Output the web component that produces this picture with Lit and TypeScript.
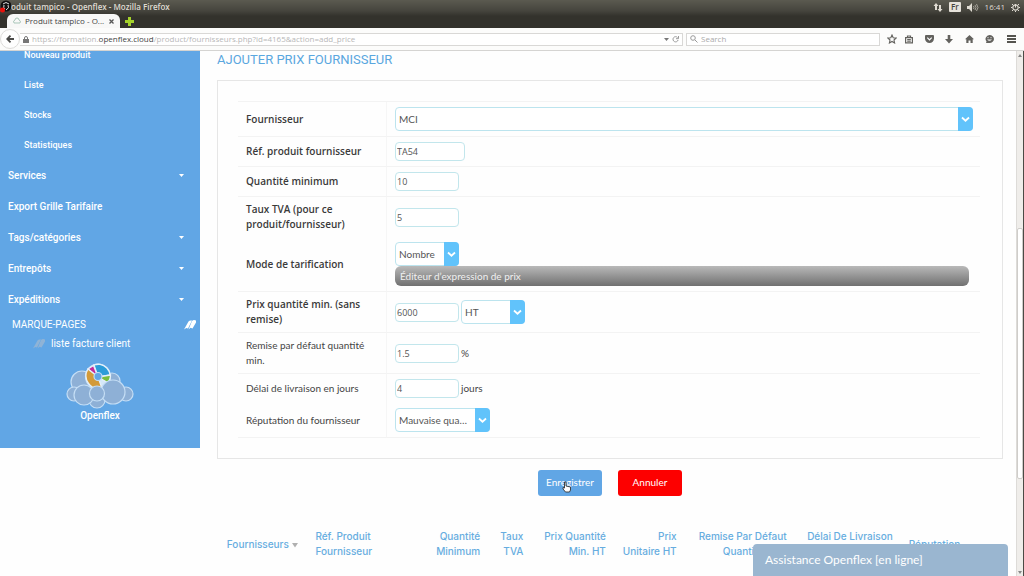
import { LitElement, html, css, svg, nothing } from "lit";
import { customElement } from "lit/decorators.js";

const SUB_ITEMS = ["Nouveau produit", "Liste", "Stocks", "Statistiques"];
const MAIN_ITEMS = [
  { label: "Services", open: true },
  { label: "Export Grille Tarifaire", open: false },
  { label: "Tags/catégories", open: true },
  { label: "Entrepôts", open: true },
  { label: "Expéditions", open: true },
];
const COLUMNS = [
  { lines: ["Réf. Produit", "Fournisseur"], left: true },
  { lines: ["Quantité", "Minimum"] },
  { lines: ["Taux", "TVA"] },
  { lines: ["Prix Quantité", "Min. HT"] },
  { lines: ["Prix", "Unitaire HT"] },
  { lines: ["Remise Par Défaut", "Quantité Min."] },
  { lines: ["Délai De Livraison", "\u00a0"] },
  { lines: ["Réputation"], left: true },
];

@customElement("browser-chrome")
class BrowserChrome extends LitElement {
  static styles = css`
    :host { display: block; font: 8px/12px "Open Sans", sans-serif; }
    .top { height: 28px; background: linear-gradient(#5b5a50, #45443d 11px, #33322c 16px, #33322c); color: #dfdbd2; display: flex; flex-direction: column; overflow: hidden; }
    .title { display: flex; align-items: center; height: 14px; }
    .title svg { flex: none; }
    .title strong { font-weight: 600; flex: 1; }
    .tray { display: flex; align-items: center; gap: 6px; padding-right: 4px; }
    .lang { background: #e6e2da; color: #45443d; border-radius: 1px; padding: 0 2px; line-height: 10px; font-weight: 600; }
    .tabs { display: flex; height: 14px; align-items: center; padding-left: 7px; gap: 5px; }
    .tab { display: flex; align-items: center; gap: 4px; height: 14px; width: 101px; padding: 0 6px; background: #f8f8f7; color: #444; border-radius: 6px 6px 0 0; box-sizing: content-box; }
    .tab span { flex: 1; white-space: nowrap; }
    button { border: 0; padding: 0; background: none; display: flex; align-items: center; justify-content: center; color: #63625e; font: inherit; }
    .bar { display: flex; align-items: center; height: 22px; background: #fcfcfb; border-bottom: 1px solid #d5d4d2; padding-right: 8px; }
    .back { width: 20px; height: 20px; border: 1px solid #dddcda; border-radius: 50%; background: #fefefe; flex: none; }
    .field { display: flex; align-items: center; gap: 3px; height: 11px; border: 1px solid #d9d8d6; background: #fff; color: #b8b8b8; padding: 0 3px; }
    .url { flex: 1; border-left: 0; }
    .address { flex: 1; white-space: nowrap; overflow: hidden; }
    .address b { font-weight: 400; color: #444; }
    .search { width: 186px; margin-left: 3px; }
    input { flex: 1; min-width: 0; border: 0; padding: 0; outline: 0; background: none; font: inherit; color: #444; }
    input::placeholder { color: #aaa; opacity: 1; }
    .tools { display: flex; align-items: center; gap: 10px; padding-left: 7px; }
    .tools button { width: 10px; height: 12px; }
    .tools .near { margin-left: -3px; }
    .tools .menu { margin-left: 2px; }
  `;
  render() {
    return html`
      <div class="top">
        <div class="title">
          <svg width="11" height="14" viewBox="0 0 11 14"><circle cx="6" cy="6" r="5.500" fill="#111"/><path d="M3 4q3-3 6 0M8 5q2 3-2 5M4 5q-1 3 1 4" stroke="#ddd" fill="none"/><circle cx="2.500" cy="10" r="2.500" fill="#e8120c"/></svg>
          <strong>oduit tampico - Openflex - Mozilla Firefox</strong>
          <div class="tray">
            <svg width="10" height="9" viewBox="0 0 10 9" fill="#dfdbd2"><path d="M3 0l2.500 3H4v4H2V3H.5zM7 9L4.500 6H6V2h2v4h1.500z"/></svg>
            <span class="lang">Fr</span>
            <svg width="12" height="9" viewBox="0 0 12 9"><path d="M0 3h2l3-3v9L2 6H0z" fill="#dfdbd2"/><path d="M6.500 3q1 1.500 0 3M8 2q2 2.500 0 5M9.500 1q3 3.500 0 7" stroke="#a5a299" fill="none"/></svg>
            <span>16:41</span>
            <svg width="9" height="9" viewBox="0 0 9 9" fill="none" stroke="#dfdbd2"><circle cx="4.500" cy="4.500" r="2.700" stroke-width="1.200"/><path d="M4.500 4.500V1M1 1l1 1M8 1L7 2M1 8l1-1M8 8L7 7M0 4.500h1M8 4.500h1M4.500 8v1"/></svg>
          </div>
        </div>
        <div class="tabs">
          <div class="tab">
            <svg width="8" height="8" viewBox="0 0 8 8"><path d="M1 6a2 2 0 011-3 2 2 0 014 0 2 2 0 011 3z" fill="none" stroke="#a9c6b9"/></svg>
            <span>Produit tampico - O...</span>
            <button aria-label="Fermer l'onglet"><svg width="5" height="5" viewBox="0 0 5 5"><path d="M.5.5l4 4M4.500.5l-4 4" stroke="#555" stroke-width="1.300"/></svg></button>
          </div>
          <button aria-label="Nouvel onglet"><svg width="9" height="9" viewBox="0 0 9 9"><path d="M3 0h3v3h3v3H6v3H3V6H0V3h3z" fill="#a4d22a"/></svg></button>
        </div>
      </div>
      <div class="bar">
        <button class="back" aria-label="Précédent"><svg width="8" height="8" viewBox="0 0 8 8"><path d="M4.500.7L1.200 4l3.300 3.300M1.500 4H8" fill="none" stroke="#4a4a48" stroke-width="1.800"/></svg></button>
        <div class="field url">
          <svg width="6" height="7" viewBox="0 0 6 7"><path d="M0 3h6v4H0z" fill="#777"/><path d="M1.500 3V2a1.500 1.500 0 013 0v1" fill="none" stroke="#777"/></svg>
          <div class="address" role="textbox" aria-label="Adresse" contenteditable="true">https://formation.<b>openflex.cloud</b>/product/fournisseurs.php?id=4165&amp;action=add_price</div>
          <svg width="5" height="3" viewBox="0 0 5 3"><path d="M0 0h5L2.500 3z" fill="#777"/></svg>
          <svg width="7" height="7" viewBox="0 0 7 7"><path d="M5.500 1.500a2.600 2.600 0 10.600 2.500M6.500 0v2.700H4" fill="none" stroke="#999"/></svg>
        </div>
        <label class="field search">
          <svg width="8" height="8" viewBox="0 0 8 8" fill="none" stroke="#999"><circle cx="3" cy="3" r="2.300"/><path d="M5 5l2.500 2.500"/></svg>
          <input type="text" placeholder="Search" aria-label="Search" />
        </label>
        <div class="tools">
          <button aria-label="Favori"><svg width="10" height="10" viewBox="0 0 10 10"><path d="M5 1l1.200 2.700 2.900.3L7 6l.6 3L5 7.500 2.400 9 3 6 .9 4l2.900-.3z" fill="none" stroke="#63625e" stroke-width="1.100"/></svg></button>
          <button class="near" aria-label="Liste"><svg width="8" height="9" viewBox="0 0 8 9"><path d="M.6 2.600h6.800v5.300H.6zM2.500 2.500v-1.500h3v1.500M2.200 4.500h3.600M2.200 6.200h3.600" fill="none" stroke="#63625e" stroke-width="1.200"/></svg></button>
          <button aria-label="Pocket"><svg width="9" height="8" viewBox="0 0 9 8"><path d="M0 1q0-1 1-1h7q1 0 1 1v2.500a4.500 4.500 0 01-9 0z" fill="#63625e"/><path d="M2.300 2.700l2.200 2.200 2.200-2.200" fill="none" stroke="#fff" stroke-width="1.200"/></svg></button>
          <button aria-label="Téléchargements"><svg width="8" height="9" viewBox="0 0 8 9"><path d="M2.700 0h2.600v4H8L4 8.500 0 4h2.700z" fill="#63625e"/></svg></button>
          <button aria-label="Accueil"><svg width="9" height="8" viewBox="0 0 9 8"><path d="M4.500 0L9 4.200H7.700V8H5.500V5.500h-2V8H1.300V4.200H0z" fill="#63625e"/></svg></button>
          <button aria-label="Discussion"><svg width="9" height="9" viewBox="0 0 9 9"><path d="M4.500 0a4.500 4 0 010 8H1l.5-1.500A4.300 4 0 014.500 0z" fill="#63625e"/><path d="M2 4.500q2.500 2.500 5 0z" fill="#fff"/><path d="M2.500 2.700h1M5.500 2.700h1" stroke="#fff"/></svg></button>
          <button class="menu" aria-label="Menu"><svg width="9" height="8" viewBox="0 0 9 8"><path d="M0 1h9M0 4h9M0 7h9" stroke="#55544f" stroke-width="1.800"/></svg></button>
        </div>
      </div>`;
  }
}

@customElement("side-menu")
class SideMenu extends LitElement {
  static styles = css`
    :host { display: block; box-sizing: border-box; width: 200px; align-self: flex-start; background: #61a6e5; color: #fff; font: 500 10px/31px Roboto, sans-serif; padding-bottom: 25px; }
    ul { list-style: none; margin: 0; padding: 0; }
    .sub { margin-top: -11px; font-size: 9px; line-height: 30px; }
    .sub a { padding-left: 24px; }
    a { display: flex; align-items: center; justify-content: space-between; color: inherit; text-decoration: none; padding: 0 16px 0 8px; }
    .marks { display: flex; justify-content: space-between; align-items: center; padding: 0 4px 0 12px; font-weight: 400; line-height: 19px; }
    .marks + a { justify-content: flex-start; gap: 6px; padding-left: 33px; font-weight: 400; line-height: 20px; }
    .brand { display: flex; flex-direction: column; align-items: center; padding-top: 9px; line-height: 14px; }
  `;
  private ribbon(color: string) {
    return html`<svg width="12" height="10" viewBox="0 0 12 10" fill=${color}><path d="M4.500 1.500q1-1.500 3.500-1L4 8.500 2.300 8 0 9.500z"/><path d="M8 1q1.500-1.500 4-.5v2L8.500 8.500 6.500 7.800 4.500 9.500z"/></svg>`;
  }
  render() {
    return html`
      <ul class="sub">${SUB_ITEMS.map((t) => html`<li><a href="#">${t}</a></li>`)}</ul>
      <ul>${MAIN_ITEMS.map((m) => html`<li><a href="#">${m.label}${m.open ? html`<svg width="5" height="3" viewBox="0 0 5 3"><path d="M0 0h5L2.500 3z" fill="#fff"/></svg>` : nothing}</a></li>`)}</ul>
      <div class="marks"><span>MARQUE-PAGES</span>${this.ribbon("#fff")}</div>
      <a href="#">${this.ribbon("#8fb3d6")}<span>liste facture client</span></a>
      <div class="brand">
        <svg width="68" height="46" viewBox="0 0 68 46" fill="#8eb0d6" stroke="#c5def5" stroke-width="1.200">
          <circle cx="46" cy="18" r="8"/><circle cx="16" cy="19" r="11"/><circle cx="8" cy="31" r="7"/><circle cx="60" cy="31" r="7"/>
          <circle cx="31" cy="37" r="8"/><circle cx="18" cy="32" r="10"/>
          <circle cx="32" cy="13.500" r="12.500" fill="#d5e8f8"/>
          <g stroke="#e4f0fa" stroke-width="1.300"><path d="M32 14L28 2Q31 1 34 1.300A12 12 0 0144 12z" fill="#2c9cd9"/><path d="M32 14L27.500 2.500 22 6z" fill="#c22a9b"/><path d="M32 14L22 6A13 13 0 0036 25.500z" fill="#d39a39"/><path d="M32 14l12.500-2q0 5-3 7.500z" fill="#79bd3e"/></g>
          <circle cx="32" cy="13.500" r="4" fill="#61a6e5"/>
          <circle cx="47" cy="29" r="12"/><circle cx="31" cy="30.500" r="7.500"/>
        </svg>
        <span>Openflex</span>
      </div>`;
  }
}

@customElement("supplier-form")
class SupplierForm extends LitElement {
  static styles = css`
    :host { display: block; font: 10px/15px Lato, sans-serif; color: #444; }
    h1 { margin: 0 0 12px; font: 400 13px/17px Roboto, sans-serif; color: #5aa7df; }
    .card { border: 1px solid #e6e6e6; padding: 20px 22px 20px 20px; }
    .card table, .prices { width: 100%; border-collapse: separate; border-spacing: 0; }
    .card table { border-top: 1px solid #f3f3f3; }
    .card tr > * { padding: 5px 7px 5px 8px; border-bottom: 1px solid #f3f3f3; vertical-align: middle; }
    .card tr.plain > * { border-bottom: 0; }
    .card th { box-sizing: border-box; width: 149px; padding-right: 20px; text-align: left; font-weight: 400; border-right: 1px solid #f6f6f6; }
    .card tr.req th { font: 600 10px/15px "Open Sans", sans-serif; color: #3a3a3a; }
    .line { display: flex; align-items: center; gap: 2px; }
    input { box-sizing: border-box; width: 64px; height: 19px; border: 1px solid #c2e6ec; border-radius: 4px; padding: 0 1px; background: #fff; font: 9px/12px "Open Sans", sans-serif; color: #555; outline: 0; }
    input.wide { width: 70px; }
    .pick { display: inline-grid; vertical-align: top; }
    .pick.full { display: grid; }
    .pick select, .pick svg { grid-area: 1 / 1; }
    .pick svg { justify-self: end; pointer-events: none; }
    select { appearance: none; box-sizing: border-box; width: 100%; height: 24px; border: 1px solid #bce4ee; border-radius: 4px; padding: 0 20px 0 3px; background: #fff; color: #555; font: 10px/15px Lato, sans-serif; text-overflow: ellipsis; outline: 0; }
    .s { width: 64px; } .l { width: 95px; }
    .editor { display: block; width: calc(100% - 4px); height: 20px; border: 0; border-radius: 6px; padding: 0 5px; text-align: left; color: #f0f0f0; background: linear-gradient(#b9b9b9, #707070); font: 10px/18px Lato, sans-serif; }
    .actions { display: flex; justify-content: center; gap: 16px; padding: 11px 0 33px; }
    .actions button { width: 64px; height: 26px; border: 0; border-radius: 3px; padding: 0 0 2px; color: #fff; font: 10px/15px Lato, sans-serif; background: #61a6e5; }
    .actions .cancel { background: #fd0000; }
    .save { position: relative; }
    .cursor { position: absolute; left: 24px; top: 11px; }
    .prices { table-layout: fixed; }
    .prices th { padding: 0 8px; text-align: right; font: 500 10px/15px Inter, sans-serif; color: #67ade0; white-space: nowrap; vertical-align: middle; }
    .prices th.left { text-align: left; }
    .prices th.sort { text-align: center; padding: 0; }
    .c0 { width: 11.5%; } .c1 { width: 13%; } .c2 { width: 10%; } .c3 { width: 5.5%; } .c4 { width: 10.5%; }
    .c5 { width: 9%; } .c6 { width: 14%; } .c7 { width: 13.5%; } .c8 { width: 13%; }
  `;
  private arrow() {
    return html`<svg width="15" height="24" viewBox="0 0 15 24"><path d="M0 0h11q4 0 4 4v16q0 4-4 4H0z" fill="#61c3fb"/><path d="M4 10.500l3.500 3.200L11 10.500" fill="none" stroke="#fff" stroke-width="1.800"/></svg>`;
  }
  private pick(id: string, value: string, size: string) {
    return html`<span class="pick ${size}"><select id=${id} aria-label=${id}><option>${value}</option></select>${this.arrow()}</span>`;
  }
  private row(id: string, label: string, cls: string, control: unknown) {
    return html`<tr class=${cls}><th scope="row"><label for=${id}>${label}</label></th><td>${control}</td></tr>`;
  }
  render() {
    return html`
      <h1>AJOUTER PRIX FOURNISSEUR</h1>
      <div class="card"><table>
        ${this.row("fournisseur", "Fournisseur", "req", this.pick("fournisseur", "MCI", "full"))}
        ${this.row("ref", "Réf. produit fournisseur", "req", html`<div class="line"><input id="ref" class="wide" .value=${"TA54"} /></div>`)}
        ${this.row("qte", "Quantité minimum", "req", html`<div class="line"><input id="qte" .value=${"10"} /></div>`)}
        ${this.row("tva", "Taux TVA (pour ce produit/fournisseur)", "req plain", html`<div class="line"><input id="tva" .value=${"5"} /></div>`)}
        ${this.row("mode", "Mode de tarification", "req", html`<div>${this.pick("mode", "Nombre", "s")}<button class="editor" type="button">Éditeur d’expression de prix</button></div>`)}
        ${this.row("prix", "Prix quantité min. (sans remise)", "req", html`<div class="line"><input id="prix" .value=${"6000"} />${this.pick("taxe", "HT", "s")}</div>`)}
        ${this.row("remise", "Remise par défaut quantité min.", "", html`<div class="line"><input id="remise" .value=${"1.5"} />%</div>`)}
        ${this.row("delai", "Délai de livraison en jours", "plain", html`<div class="line"><input id="delai" .value=${"4"} />jours</div>`)}
        ${this.row("reputation", "Réputation du fournisseur", "", this.pick("reputation", "Mauvaise qualité", "l"))}
      </table></div>
      <div class="actions">
        <button class="save">Enregistrer<svg class="cursor" width="10" height="12" viewBox="0 0 10 12"><path d="M2.500 1h1.500v4l4.500 1v3L7.500 11h-4L1 8V6.500l1.500.5z" fill="#fff" stroke="#333" stroke-width=".9"/></svg></button>
        <button class="cancel">Annuler</button>
      </div>
      <table class="prices">
        <colgroup>${[0, 1, 2, 3, 4, 5, 6, 7, 8].map((i) => html`<col class="c${i}" />`)}</colgroup>
        <tr>
          <th class="sort">Fournisseurs <svg width="6" height="5" viewBox="0 0 6 5"><path d="M0 0h6L3 4.500z" fill="#b0b0b0"/></svg></th>
          ${COLUMNS.map((c) => html`<th class=${c.left ? "left" : ""}>${c.lines.map((l, i) => html`${i ? html`<br />` : nothing}${l}`)}</th>`)}
        </tr>
      </table>`;
  }
}

@customElement("app-root")
class AppRoot extends LitElement {
  static styles = css`
    :host { display: flex; flex-direction: column; height: 100vh; overflow: hidden; background: #fefefe; }
    .view { flex: 1; min-height: 0; display: flex; overflow: hidden; position: relative; border-right: 1px solid #4b4a45; }
    supplier-form { flex: 1; min-width: 0; margin: 0 13px 0 17px; }
    .scroll { width: 7px; flex: none; background: #efedea; border-left: 1px solid #dddbd8; display: flex; flex-direction: column; box-sizing: border-box; align-items: center; }
    .step { height: 8px; display: flex; align-items: center; }
    .gap { flex: 170; }
    .thumb { flex: 250; align-self: stretch; background: #fff; border: 1px solid #cfcdca; border-radius: 2px; }
    .rest { flex: 89; }
    .chat { position: absolute; right: 15px; bottom: 0; width: 255px; box-sizing: border-box; height: 32px; border: 0; border-radius: 4px 4px 0 0; padding: 0 12px; text-align: left; background: #9ab6d0; color: #fff; font: 12px/32px Lato, sans-serif; }
  `;
  render() {
    return html`
      <browser-chrome></browser-chrome>
      <div class="view">
        <side-menu></side-menu>
        <supplier-form></supplier-form>
        <div class="scroll">
          <span class="step"><svg width="4" height="3" viewBox="0 0 4 3">${svg`<path d="M0 3h4L2 0z" fill="#888"/>`}</svg></span>
          <span class="gap"></span><span class="thumb"></span><span class="rest"></span>
          <span class="step"><svg width="4" height="3" viewBox="0 0 4 3">${svg`<path d="M0 0h4L2 3z" fill="#888"/>`}</svg></span>
        </div>
        <button class="chat">Assistance Openflex [en ligne]</button>
      </div>`;
  }
}
